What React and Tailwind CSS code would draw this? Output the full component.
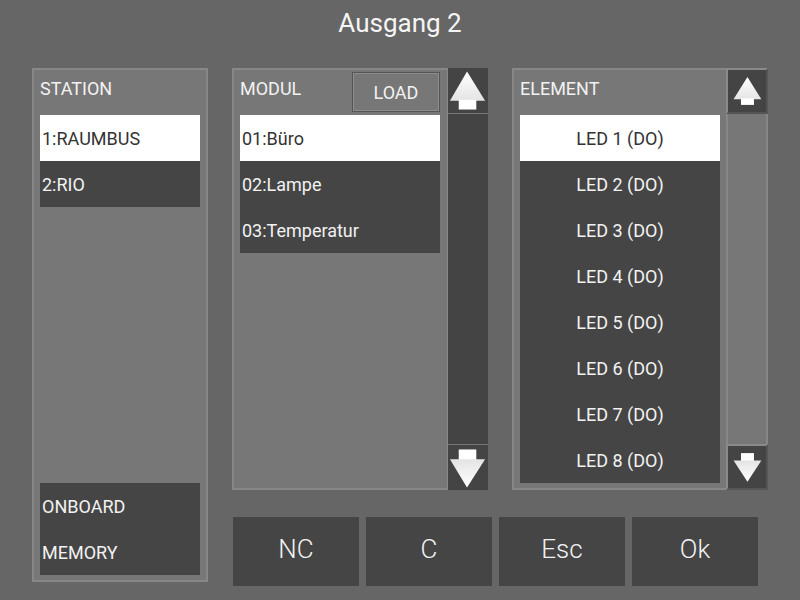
import React from "react";

const UpArrow = ({ small }) =>
  small ? (
    <svg width="41" height="46" viewBox="0 0 41 46">
      <defs>
        <linearGradient id="ua2" x1="0" y1="0" x2="0" y2="1">
          <stop offset="0" stopColor="#ffffff" />
          <stop offset="1" stopColor="#e4e4e4" />
        </linearGradient>
      </defs>
      <polygon points="21,8 36,32 6,32" fill="url(#ua2)" />
      <rect x="14" y="31" width="14" height="7" fill="#ffffff" />
    </svg>
  ) : (
    <svg width="41" height="46" viewBox="0 0 41 46">
      <defs>
        <linearGradient id="ua1" x1="0" y1="0" x2="0" y2="1">
          <stop offset="0" stopColor="#ffffff" />
          <stop offset="1" stopColor="#e4e4e4" />
        </linearGradient>
      </defs>
      <polygon points="19.5,3 38,33 2,33" fill="url(#ua1)" />
      <rect x="11" y="32" width="18" height="10" fill="#ffffff" />
    </svg>
  );

const DownArrow = ({ small }) =>
  small ? (
    <svg width="41" height="46" viewBox="0 0 41 46">
      <defs>
        <linearGradient id="da2" x1="0" y1="0" x2="0" y2="1">
          <stop offset="0" stopColor="#e4e4e4" />
          <stop offset="1" stopColor="#ffffff" />
        </linearGradient>
      </defs>
      <rect x="14" y="8" width="14" height="9" fill="#ffffff" />
      <polygon points="6,16 36,16 21,39" fill="url(#da2)" />
    </svg>
  ) : (
    <svg width="41" height="46" viewBox="0 0 41 46">
      <defs>
        <linearGradient id="da1" x1="0" y1="0" x2="0" y2="1">
          <stop offset="0" stopColor="#e4e4e4" />
          <stop offset="1" stopColor="#ffffff" />
        </linearGradient>
      </defs>
      <rect x="11" y="4" width="18" height="11" fill="#ffffff" />
      <polygon points="2,14 38,14 19.5,43" fill="url(#da1)" />
    </svg>
  );

const Item = ({ label, active, center }) => (
  <div
    className={`h-[46px] flex items-center text-[18px] ${
      center ? "justify-center" : "pl-[2px]"
    } ${active ? "bg-white text-[#333]" : "bg-[#454545] text-[#f2f2f2]"}`}
  >
    {label}
  </div>
);

const Header = ({ children }) => (
  <div className="h-[45px] flex items-start justify-between text-[18px] leading-[21px] text-[#f2f2f2]">
    {children}
  </div>
);

const modules = ["01:Büro", "02:Lampe", "03:Temperatur"];
const leds = [1, 2, 3, 4, 5, 6, 7, 8];

export default function App() {
  return (
    <div
      className="w-[800px] h-[600px] bg-[#666666] overflow-hidden"
      style={{ fontFamily: "Roboto, 'Liberation Sans', sans-serif" }}
    >
      <div className="h-[46px] flex items-center justify-center text-[26px] text-[#f5f5f5]">
        Ausgang 2
      </div>

      <div className="flex gap-[24px] pl-[32px] mt-[22px]">
        {/* station */}
        <div className="w-[176px] h-[514px] bg-[#777777] border-2 border-[#878787] px-[6px] pb-[5px] flex flex-col">
          <Header>
            <span className="mt-[8px]">STATION</span>
          </Header>
          <Item label="1:RAUMBUS" active />
          <Item label="2:RIO" />
          <div className="flex-1" />
          <div className="bg-[#454545] text-[#f2f2f2] text-[18px]">
            <div className="h-[46px] flex items-center pl-[2px]">ONBOARD</div>
            <div className="h-[46px] flex items-center pl-[2px]">MEMORY</div>
          </div>
        </div>

        <div className="flex flex-col">
          <div className="flex gap-[24px]">
            {/* modul */}
            <div className="flex w-[256px] h-[422px]">
              <div className="flex-1 bg-[#777777] border-2 border-r-0 border-[#878787] pl-[6px] pr-[7px]">
                <Header>
                  <span className="mt-[8px]">MODUL</span>
                  <button className="w-[88px] h-[40px] mt-[2px] border border-[#555555] shadow-[inset_0_0_0_1px_#8c8c8c] bg-[#777777] text-[18px] text-[#f2f2f2] flex items-center justify-center pt-[1px]">
                    LOAD
                  </button>
                </Header>
                {modules.map((m, i) => (
                  <Item key={m} label={m} active={i === 0} />
                ))}
              </div>
              <div className="w-[41px] flex flex-col bg-[#444444] border-l border-[#888888]">
                <div className="h-[46px] border-b border-[#777777] flex items-center justify-center">
                  <UpArrow />
                </div>
                <div className="flex-1" />
                <div className="h-[46px] border-t border-[#777777] flex items-center justify-center">
                  <DownArrow />
                </div>
              </div>
            </div>

            {/* element */}
            <div className="flex w-[256px] h-[422px]">
              <div className="flex-1 bg-[#777777] border-2 border-r-0 border-[#878787] px-[6px] pb-[5px]">
                <Header>
                  <span className="mt-[8px]">ELEMENT</span>
                </Header>
                {leds.map((n) => (
                  <Item key={n} label={`LED ${n} (DO)`} active={n === 1} center />
                ))}
              </div>
              <div className="w-[42px] flex flex-col">
                <div className="h-[46px] bg-[#444444] border-2 border-t-[#8a8a8a] border-l-[#8a8a8a] border-b-[#555555] border-r-[#555555] flex items-center justify-center">
                  <UpArrow small />
                </div>
                <div className="flex-1 bg-[#777777] border-x-2 border-[#878787]" />
                <div className="h-[46px] bg-[#444444] border-2 border-t-[#8a8a8a] border-l-[#8a8a8a] border-b-[#555555] border-r-[#555555] flex items-center justify-center">
                  <DownArrow small />
                </div>
              </div>
            </div>
          </div>

          <div className="flex gap-[7px] mt-[27px] ml-[1px]">
            {["NC", "C", "Esc", "Ok"].map((b) => (
              <button
                key={b}
                className="w-[126px] h-[69px] bg-[#454545] text-[#f2f2f2] text-[26px] font-light flex items-center justify-center pb-[4px]"
              >
                {b}
              </button>
            ))}
          </div>
        </div>
      </div>
    </div>
  );
}
